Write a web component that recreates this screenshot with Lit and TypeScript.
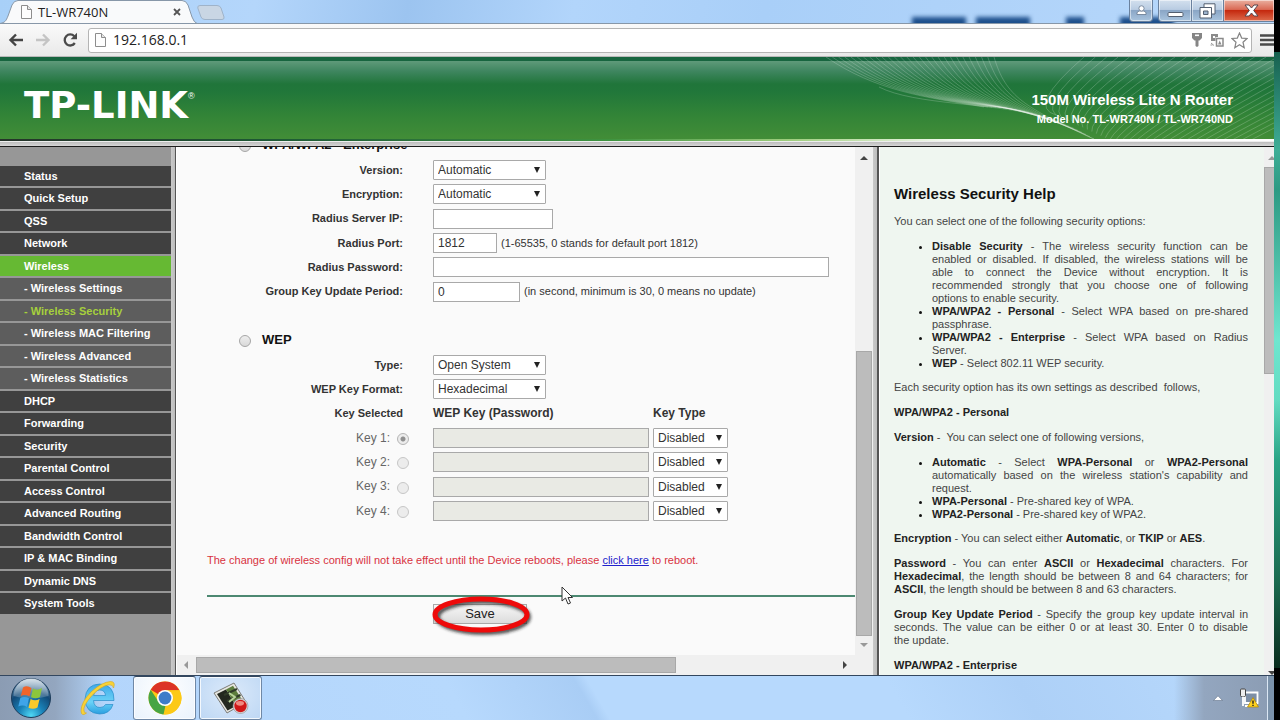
import { LitElement, html, svg, css } from "lit";
import { customElement, state } from "lit/decorators.js";
import { classMap } from "lit/directives/class-map.js";

interface NavItem {
  label: string;
  sub?: boolean;
}

const NAV: NavItem[] = [
  { label: "Status" },
  { label: "Quick Setup" },
  { label: "QSS" },
  { label: "Network" },
  { label: "Wireless" },
  { label: "Wireless Settings", sub: true },
  { label: "Wireless Security", sub: true },
  { label: "Wireless MAC Filtering", sub: true },
  { label: "Wireless Advanced", sub: true },
  { label: "Wireless Statistics", sub: true },
  { label: "DHCP" },
  { label: "Forwarding" },
  { label: "Security" },
  { label: "Parental Control" },
  { label: "Access Control" },
  { label: "Advanced Routing" },
  { label: "Bandwidth Control" },
  { label: "IP & MAC Binding" },
  { label: "Dynamic DNS" },
  { label: "System Tools" },
];

/* ---------- browser window chrome ---------- */
@customElement("browser-chrome")
export class BrowserChrome extends LitElement {
  static styles = css`
    :host {
      display: block;
      font-family: "Open Sans", "Noto Sans", sans-serif;
      color: #222;
    }
    button {
      border: 0;
      padding: 0;
      margin: 0;
      background: none;
      font: inherit;
      color: inherit;
      display: flex;
      align-items: center;
      justify-content: center;
    }
    svg {
      display: block;
    }
    .strip {
      position: relative;
      display: flex;
      align-items: flex-start;
      height: 23px;
      overflow: hidden;
      background: linear-gradient(100deg, #a8d0f8 0, #b4d6fb 20%, #9cc4f0 32%, #b2d5fb 45%, #a9cff8 60%, #b8d8fb 100%);
    }
    .blur {
      position: absolute;
      right: 100px;
      top: 17px;
      display: flex;
      gap: 10px;
      filter: blur(2px);
    }
    .blur i {
      width: 54px;
      height: 12px;
      background: #1d4f8c;
    }
    .blur i.short {
      width: 18px;
      margin: 0 26px;
    }
    .tab {
      position: relative;
      flex: none;
      width: 197px;
      height: 23px;
    }
    .shape {
      position: absolute;
      inset: 0;
    }
    .tabline {
      position: relative;
      display: flex;
      align-items: center;
      height: 23px;
      padding: 1px 16px 0 21px;
      box-sizing: border-box;
      font-size: 13px;
    }
    .tabline span {
      flex: 1;
      padding-left: 6px;
    }
    .newtab {
      margin-top: 5px;
    }
    .spacer {
      flex: 1;
    }
    .controls {
      position: relative;
      display: flex;
    }
    .wbtn {
      height: 22px;
      border: 1px solid #6a819e;
      border-top: 0;
      box-sizing: border-box;
      background: linear-gradient(#d3e0ee 0, #b9cce2 45%, #8aa6c6 50%, #a9c4de 100%);
      box-shadow: inset 0 0 0 1px rgba(255, 255, 255, 0.5);
    }
    .user {
      width: 24px;
      border-radius: 0 0 4px 4px;
      margin-right: 5px;
    }
    .min {
      width: 34px;
      border-radius: 0 0 0 4px;
    }
    .max {
      width: 32px;
      border-left: 0;
    }
    .close {
      width: 50px;
      border-left: 0;
      border-right: 0;
      padding-left: 5px;
      background: linear-gradient(#eab0a0 0, #da6a55 45%, #c5290f 50%, #dd6b4c 100%);
    }
    .bar {
      display: flex;
      align-items: center;
      height: 34px;
      box-sizing: border-box;
      border-top: 1px solid #8797a8;
      border-bottom: 1px solid #b9b9b9;
      background: linear-gradient(#fafafa, #e9e9e9);
      padding-left: 7px;
    }
    .nav {
      width: 18px;
      margin-right: 9px;
      height: 20px;
    }
    .omni {
      flex: 1;
      display: flex;
      align-items: center;
      height: 25px;
      box-sizing: border-box;
      border: 1px solid #b4b4b4;
      border-radius: 3px;
      background: #fff;
      padding: 0 3px 0 6px;
      gap: 7px;
    }
    .omni input {
      flex: 1;
      min-width: 0;
      border: 0;
      outline: 0;
      padding: 0;
      background: none;
      font: 14px/20px "Open Sans", "Noto Sans", sans-serif;
      color: #222;
    }
    .menu {
      width: 22px;
      padding-left: 5px;
      overflow: hidden;
    }
  `;

  private page() {
    return html`<svg width="11" height="14" viewBox="0 0 11 14" aria-hidden="true">
      <path d="M.5.5h6l4 4v9H.5z" fill="#fdfdfd" stroke="#8d8d8d" />
      <path d="M6.500 .5v4h4" fill="#e6e6e6" stroke="#8d8d8d" />
    </svg>`;
  }

  render() {
    return html`
      <div class="strip">
        <div class="blur"><i></i><i></i><i class="short"></i><i></i></div>
        <div class="tab">
          <svg class="shape" width="197" height="23" viewBox="0 0 197 23" aria-hidden="true">
            <path d="M0 23.500C5 22.500 6 21 8 16L12 5Q14 .5 18 .5H182Q186 .5 188 5L192 17Q194 22.500 197 23.500Z" fill="#f9fafb" stroke="#8797a8" />
          </svg>
          <div class="tabline">
            ${this.page()}<span>TL-WR740N</span>
            <button aria-label="Close tab">
              <svg width="8" height="8" viewBox="0 0 8 8"><path d="M1 1l6 6M7 1L1 7" stroke="#555" stroke-width="1.800" /></svg>
            </button>
          </div>
        </div>
        <button class="newtab" aria-label="New tab">
          <svg width="28" height="15" viewBox="0 0 28 15">
            <path d="M3 .5H20Q23 .5 24 3L27 12Q27.500 14.500 25 14.500H8Q5 14.500 4 12L.8 3Q.3 .5 3 .5Z" fill="#c9d6e4" stroke="#9fb3c9" />
          </svg>
        </button>
        <div class="spacer"></div>
        <div class="controls">
          <button class="wbtn user" aria-label="User">
            <svg width="11" height="11" viewBox="0 0 11 11"><path d="M1 9.500V8Q1 6.500 3.500 6H7.500Q10 6.500 10 8V9.500Z" fill="#fff" stroke="#65778e" stroke-width=".8" /><circle cx="5.500" cy="3.400" r="2.600" fill="#fff" stroke="#65778e" stroke-width=".8" /></svg>
          </button>
          <button class="wbtn min" aria-label="Minimize">
            <svg width="17" height="16" viewBox="0 0 17 16"><rect x="1" y="9.500" width="15" height="4" rx="1" fill="#fff" stroke="#535f70" /></svg>
          </button>
          <button class="wbtn max" aria-label="Restore">
            <svg width="17" height="16" viewBox="0 0 17 16">
              <path d="M5 .8H16V11H5Z" fill="#fff" stroke="#535f70" />
              <path d="M1 4.500H12.500V15H1Z" fill="#fff" stroke="#535f70" />
              <path d="M4.500 8H9V11.500H4.500Z" fill="#9db4ce" stroke="#535f70" />
            </svg>
          </button>
          <button class="wbtn close" aria-label="Close">
            <svg width="15" height="13" viewBox="0 0 15 13"><path d="M1 1H5L7.500 4L10 1H14L9.700 6.500L14 12H10L7.500 9L5 12H1L5.300 6.500Z" fill="#fff" stroke="#58464c" /></svg>
          </button>
        </div>
      </div>
      <div class="bar">
        <button class="nav" aria-label="Back">
          <svg width="16" height="14" viewBox="0 0 16 14"><path d="M15 7H3M8 1.500L2.500 7L8 12.500" fill="none" stroke="#444" stroke-width="2.400" /></svg>
        </button>
        <button class="nav" aria-label="Forward">
          <svg width="16" height="14" viewBox="0 0 16 14"><path d="M1 7H13M8 1.500L13.500 7L8 12.500" fill="none" stroke="#c4c4c4" stroke-width="2.400" /></svg>
        </button>
        <button class="nav" aria-label="Reload">
          <svg width="16" height="16" viewBox="0 0 16 16"><path d="M12.800 11A5.500 5.500 0 1 1 12.300 4.300" fill="none" stroke="#4a4a4a" stroke-width="2.300" /><path d="M15 .8V7.200H8.600Z" fill="#4a4a4a" /></svg>
        </button>
        <div class="omni">
          ${this.page()}
          <input aria-label="Address" value="192.168.0.1" />
          <svg width="12" height="16" viewBox="0 0 12 16" aria-hidden="true"><path d="M1 1H11V6L8.500 8.500H7.500V14L6 15L4.500 14V8.500H3.500L1 6Z" fill="#858585" /><rect x="4" y="2.500" width="4" height="1.600" fill="#fff" /></svg>
          <svg width="14" height="14" viewBox="0 0 14 14" aria-hidden="true">
            <path d="M1 1H8V4H5.500V8H1Z" fill="#8a8a8a" /><path d="M3 3h2v2H3z" fill="#fff" />
            <rect x="6.500" y="5.500" width="6.500" height="7.500" fill="#fff" stroke="#8a8a8a" stroke-width="1.500" />
            <path d="M8 11.500L9.700 7.500L11.500 11.500Z" fill="#8a8a8a" /><path d="M1 10L4 12.500M.5 12h2" stroke="#999" />
          </svg>
          <svg width="17" height="17" viewBox="0 0 17 17" aria-hidden="true"><path d="M8.500 1L10.700 6.100L16 6.500L12 10.200L13.200 15.700L8.500 12.800L3.800 15.700L5 10.200L1 6.500L6.300 6.100Z" fill="#fff" stroke="#858585" stroke-width="1.200" /></svg>
        </div>
        <button class="menu" aria-label="Menu">
          <svg width="16" height="14" viewBox="0 0 16 14"><path d="M2 2.500H16M2 7H16M2 11.500H16" stroke="#4a4a4a" stroke-width="2.400" /></svg>
        </button>
      </div>
    `;
  }
}

/* ---------- Windows taskbar ---------- */
@customElement("task-bar")
export class TaskBar extends LitElement {
  static styles = css`
    :host {
      display: flex;
      align-items: stretch;
      height: 45px;
      box-sizing: border-box;
      border-top: 1px solid #33475f;
      background:
        linear-gradient(90deg, #8b9cb3 0, #93a6bf 55px, rgba(181, 214, 252, 0) 105px),
        linear-gradient(270deg, #8b9cb3 0, #93a6bf 70px, rgba(181, 214, 252, 0) 100px),
        linear-gradient(60deg, #b2d4fb 0, #b7d9fd 36%, #a9cdf5 46%, #b7d9fd 47%, #b7d9fd 70%, #add0f7 80%, #b9dafd 100%);
    }
    button {
      border: 0;
      padding: 0;
      background: none;
      display: flex;
      align-items: center;
      justify-content: center;
    }
    svg {
      display: block;
    }
    .start {
      width: 62px;
    }
    .ie {
      width: 71px;
    }
    .task {
      width: 63px;
      box-sizing: border-box;
      border: 1px solid #6f88a6;
      border-top-color: #33475f;
      border-radius: 3px;
      box-shadow: inset 0 0 0 1px rgba(255, 255, 255, 0.8);
      margin-right: 3px;
      background: radial-gradient(ellipse at 50% 40%, #dceafa, #bdd7f4);
    }
    .task.on {
      background: radial-gradient(ellipse at 50% 30%, #ffffff, #e9f2fc);
    }
    .spacer {
      flex: 1;
    }
    .tray {
      display: flex;
      align-items: center;
      gap: 16px;
      padding-right: 8px;
    }
    .show {
      width: 6px;
      border-left: 1px solid #dbe7f4;
      background: #7c93ab;
    }
  `;

  render() {
    return html`
      <button class="start" aria-label="Start">
        <svg width="42" height="42" viewBox="0 0 42 42">
          <defs>
            <radialGradient id="orb" cx=".5" cy=".95" r=".9">
              <stop offset="0" stop-color="#4fd8f5" /><stop offset=".35" stop-color="#1a82b8" /><stop offset=".7" stop-color="#124a78" /><stop offset="1" stop-color="#5f88aa" />
            </radialGradient>
            <linearGradient id="gloss" x2="0" y2="1"><stop offset="0" stop-color="#fff" stop-opacity=".75" /><stop offset="1" stop-color="#fff" stop-opacity=".15" /></linearGradient>
          </defs>
          <circle cx="21" cy="21" r="19.500" fill="url(#orb)" stroke="#1d3c5a" />
          <path d="M3.500 19A17.500 17.500 0 0 1 38.500 19Q21 24 3.500 19Z" fill="url(#gloss)" />
          <path d="M13 10.500Q17 8 21.500 11L19.500 19.500Q15 17 10.800 19Z" fill="#f0642a" />
          <path d="M23 11.500Q27 14 32 11L30 20Q25.500 22.500 21 20Z" fill="#8cc63c" />
          <path d="M10.300 21Q14.500 18.800 19 21.300L17 30Q13 27.500 8.300 29.500Z" fill="#3fa4e8" />
          <path d="M20.600 22Q25 24.500 29.600 22L27.500 30.500Q23 33 18.500 30.700Z" fill="#fcc92c" />
        </svg>
      </button>
      <button class="ie" aria-label="Internet Explorer">
        <svg width="38" height="38" viewBox="0 0 38 38">
          <defs><linearGradient id="ieg" x2="0" y2="1"><stop offset="0" stop-color="#3fa9e8" /><stop offset=".6" stop-color="#6bd2f7" /><stop offset="1" stop-color="#2b9fe0" /></linearGradient></defs>
          <path d="M35 21.500H14.500Q15 28.500 21 28.500Q25 28.500 26.500 25.500H34Q31 35 20.500 35Q6.500 34 6 20Q7 5.500 20.500 5Q35.500 5.500 35 21.500ZM14.600 16.500H26.500Q26 11 20.700 11Q15.500 11.200 14.600 16.500Z" fill="url(#ieg)" stroke="#2a8cc9" stroke-width=".7" />
          <path d="M7.500 34Q2.500 38 2 32Q2 23 12.500 12.500Q23 3 31.500 2.500Q37 2.500 34.500 9Q34 5.500 30 5.800Q22 7 13 16.500Q3.500 27 5 32Q5.500 34.500 7.500 34Z" fill="#f8d238" stroke="#d9a818" stroke-width=".6" />
        </svg>
      </button>
      <button class="task on" aria-label="Google Chrome">
        <svg width="34" height="34" viewBox="0 0 34 34">
          <circle cx="17" cy="17" r="16.500" fill="#fcc916" />
          <path d="M17 17L2.700 8.700A16.500 16.500 0 0 1 31.400 9.200L17 9.500Z" fill="#dc3326" />
          <path d="M2.700 8.700L10.500 20.700L17.500 24.500L15.500 33.400A16.500 16.500 0 0 1 2.700 8.700Z" fill="#47a544" />
          <path d="M15.500 33.500L24 20L17 9.200H31.400A16.500 16.500 0 0 1 15.500 33.500Z" fill="#fcc916" />
          <circle cx="17" cy="17" r="8" fill="#fff" />
          <circle cx="17" cy="17" r="6.400" fill="#3d7cc9" />
        </svg>
      </button>
      <button class="task" aria-label="Screen recorder">
        <svg width="38" height="34" viewBox="0 0 38 34">
          <path d="M2 12L22 2L34 21L15 32Z" fill="#e6e6e0" stroke="#7c7c78" />
          <path d="M5 13L14 8.500L24 25L15.500 29.500Z" fill="#23281f" />
          <path d="M14 8.500L21 4.800L31.500 21L24 25Z" fill="#5d7d3d" />
          <path d="M12 14L25 8M15 20L28.500 14" stroke="#2f3a28" stroke-width="2" />
          <path d="M17 12L23 16L17 21" fill="none" stroke="#b8d49a" stroke-width="2" />
          <circle cx="28.500" cy="25" r="7.500" fill="#d8d8d8" stroke="#8f8f8f" stroke-width=".6" />
          <circle cx="28.500" cy="25" r="6.200" fill="#d01818" />
          <ellipse cx="28" cy="22.300" rx="4" ry="2.400" fill="#f08a80" />
        </svg>
      </button>
      <div class="spacer"></div>
      <div class="tray">
        <svg width="10" height="6" viewBox="0 0 10 6" aria-hidden="true"><path d="M.5 5.500L5 .8L9.500 5.500Z" fill="#fff" stroke="#607188" stroke-width=".6" /></svg>
        <svg width="20" height="20" viewBox="0 0 20 20" aria-hidden="true">
          <path d="M6 4.500H18.500V15H6Z" fill="#7d8fa6" stroke="#fff" stroke-width="1.800" />
          <rect x="1.500" y="1" width="5" height="7.500" rx="1" fill="#eee" stroke="#444" />
          <path d="M4 8.500V18M6 18H12" stroke="#fff" stroke-width="1.800" />
          <path d="M14 9.500L19.500 19H8.500Z" fill="#ffd21f" stroke="#b08400" stroke-width=".7" />
          <path d="M14 12.500V15.800M14 16.800V18" stroke="#222" stroke-width="1.400" />
        </svg>
      </div>
      <div class="show"></div>
    `;
  }
}

/* ---------- router page and desktop ---------- */
@customElement("app-root")
export class AppRoot extends LitElement {
  @state() private current = "Wireless Security";

  static styles = css`
    :host {
      display: grid;
      grid-template-columns: 1fr 6px;
      height: 100vh;
      overflow: hidden;
      position: relative;
      font: 12px/13px "Liberation Sans", Arial, sans-serif;
      color: #333;
    }
    .desktop {
      background: linear-gradient(#000 52px, #17604f 52px, #3fae97 150px, #2d9a83 190px, #6fe6cf 340px, #63dcc2 400px, #2aa486 460px, #1b6a50 580px, #0a2c1e 668px, #000 668px);
    }
    .screen {
      display: flex;
      flex-direction: column;
      min-width: 0;
      height: 100vh;
    }
    .banner {
      position: relative;
      display: flex;
      align-items: center;
      justify-content: space-between;
      height: 82px;
      flex: none;
      overflow: hidden;
      padding: 0 41px 0 24px;
      color: #fff;
      background: linear-gradient(#17653f 0, #17653f 4px, #5f9a7a 4px, #3f8660 14px, #20753a 27px, #21773a 35px, #328437 58px, #428d37 82px);
    }
    .mesh {
      position: absolute;
      right: 0;
      top: 0;
    }
    .logo {
      position: relative;
      display: flex;
      align-items: flex-start;
      padding-top: 16px;
      font: bold 37px/40px "DejaVu Sans", sans-serif;
    }
    .logo sup {
      font: 9px/9px "Liberation Sans", sans-serif;
      padding-top: 6px;
    }
    .model {
      position: relative;
      text-align: right;
      font-weight: bold;
      padding-top: 21px;
    }
    .model h1 {
      margin: 0;
      font-size: 15px;
      line-height: 20px;
    }
    .model p {
      margin: 0;
      font-size: 11px;
      line-height: 18px;
    }
    .rule {
      flex: none;
      height: 2px;
      background: linear-gradient(90deg, #26332a 0, #1d5a35 22%, #3f9440 48%, #9fcd7e 62%, #fff 76%);
    }
    .groove {
      flex: none;
      height: 6px;
      box-sizing: border-box;
      border-top: 1px solid #eee;
      border-bottom: 1px solid #1c1c1c;
      background: linear-gradient(#bdbdbd, #d6d6d6);
    }
    .frames {
      flex: 1;
      min-height: 0;
      display: grid;
      grid-template-columns: 171px 6px minmax(0, 1fr) 7px 394px;
    }
    .split {
      background: linear-gradient(90deg, #c9c9c9 0, #bdbdbd 60%, #555 61%, #555 80%, #fff 81%);
    }
    .side {
      background: #979797;
      padding-top: 19px;
      overflow: hidden;
    }
    .side ul {
      list-style: none;
      margin: 0;
      padding: 0;
      display: flex;
      flex-direction: column;
      gap: 2px;
    }
    .side li {
      height: 20px;
    }
    .side li:nth-child(even) {
      height: 21px;
    }
    .side a {
      display: block;
      height: 100%;
      padding-left: 24px;
      background: #404040;
      color: #fff;
      font-size: 11px;
      font-weight: bold;
      line-height: 20px;
      text-decoration: none;
      white-space: nowrap;
    }
    .side a.sub {
      background: #5d5d5d;
    }
    .side a.open {
      background: #66b933;
    }
    .side a.here {
      color: #a6d03c;
    }
    .center {
      display: grid;
      grid-template-columns: minmax(0, 1fr) 18px;
      grid-template-rows: minmax(0, 1fr) 20px;
      background: #f0f0f0;
    }
    .pane {
      background: #fafafa;
      overflow: hidden;
      padding-left: 30px;
    }
    .vbar {
      display: flex;
      flex-direction: column;
      align-items: center;
      gap: 6px;
      padding: 7px 0 5px;
      box-sizing: border-box;
    }
    .vthumb {
      width: 16px;
      flex: 0 0 285px;
      box-sizing: border-box;
      background: #bcbcbc;
      border: 1px solid #a8a8a8;
    }
    .vgap {
      flex: 1;
    }
    .hbar {
      display: flex;
      align-items: center;
      gap: 6px;
      padding: 0 6px 0 5px;
    }
    .hthumb {
      flex: 0 0 72%;
      height: 16px;
      box-sizing: border-box;
      background: #bcbcbc;
      border: 1px solid #a8a8a8;
    }
    .hgap {
      flex: 1;
    }
    .mode {
      display: flex;
      align-items: center;
      gap: 11px;
      padding-left: 32px;
      height: 20px;
      font-size: 13px;
      font-weight: bold;
      color: #111;
    }
    .mode.first {
      margin-top: -12px;
    }
    .mode.next {
      margin-top: 26px;
    }
    .mode label {
      line-height: 20px;
    }
    .rows {
      margin-top: 3px;
    }
    .row {
      display: grid;
      grid-template-columns: 196px 1fr;
      column-gap: 30px;
      align-items: center;
      height: 24px;
    }
    .row:nth-child(3n) {
      height: 25px;
    }
    .name {
      text-align: right;
      font-size: 11px;
      font-weight: bold;
      white-space: nowrap;
    }
    .name.key {
      display: flex;
      align-items: center;
      justify-content: flex-end;
      gap: 7px;
      margin-right: -6px;
      font-size: 12px;
      font-weight: normal;
      color: #666;
    }
    .field {
      display: flex;
      align-items: center;
      gap: 4px;
      white-space: nowrap;
    }
    .note {
      font-size: 11px;
    }
    .head {
      font-weight: bold;
    }
    .wide {
      width: 216px;
    }
    .text {
      height: 20px;
      box-sizing: border-box;
      border: 1px solid #a9a9a9;
      padding: 0 4px;
      margin: 0;
      background: #fff;
      font: 12px/18px "Liberation Sans", Arial, sans-serif;
      color: #333;
      border-radius: 0;
    }
    .text:disabled {
      background: #e9eae4;
    }
    .ip {
      width: 120px;
    }
    .port {
      width: 64px;
    }
    .pass {
      width: 396px;
    }
    .period {
      width: 87px;
    }
    .pick {
      position: relative;
      display: block;
    }
    .pick select {
      appearance: none;
      width: 100%;
      height: 20px;
      box-sizing: border-box;
      border: 1px solid #a9a9a9;
      border-radius: 1px;
      background: #fff;
      padding: 0 4px;
      margin: 0;
      font: 12px/18px "Liberation Sans", Arial, sans-serif;
      color: #333;
      display: block;
    }
    .pick svg {
      position: absolute;
      right: 6px;
      top: 7px;
      pointer-events: none;
    }
    .pick.big {
      width: 113px;
    }
    .pick.small {
      width: 75px;
    }
    input[type="radio"] {
      appearance: none;
      flex: none;
      width: 12px;
      height: 12px;
      margin: 2px 0 0;
      border: 1px solid #a6a6a6;
      border-radius: 50%;
      background: linear-gradient(#eee, #d9d9d9);
    }
    input[type="radio"]:disabled {
      border-color: #c6c6c6;
      background: #ececec;
    }
    input[type="radio"]:checked {
      background: radial-gradient(circle, #8f8f8f 0, #8f8f8f 2px, #ececec 3px);
      border-color: #b4b4b4;
    }
    .warn {
      margin: 28px 0 0;
      font-size: 11px;
      line-height: 18px;
      color: #d8323f;
      white-space: nowrap;
    }
    .warn a {
      color: #2222cc;
    }
    .line {
      height: 2px;
      margin-top: 26px;
      background: #4c8871;
    }
    .actions {
      display: flex;
      padding: 7px 0 0 226px;
    }
    .save {
      position: relative;
    }
    .save button {
      display: block;
      width: 94px;
      height: 20px;
      padding: 0;
      border: 1px solid #a9a9a9;
      background: linear-gradient(#f6f6f6, #dcdcdc);
      font: 13px/18px "Liberation Sans", Arial, sans-serif;
      color: #222;
    }
    .ring {
      position: absolute;
      left: -4px;
      top: -12px;
      pointer-events: none;
    }
    .help {
      display: grid;
      grid-template-columns: 1fr 10px;
      background: #eff6f0;
      overflow: hidden;
    }
    .text-col {
      padding: 37px 16px 0 14px;
      text-align: justify;
      color: #444;
      min-width: 0;
      font-size: 11px;
    }
    .text-col b,
    .text-col h3 {
      color: #222;
    }
    .text-col h2 {
      margin: 0 0 11px;
      font-size: 15px;
      line-height: 20px;
      color: #111;
    }
    .text-col p,
    .text-col h3 {
      margin: 0 0 12px;
      font-size: 11px;
      line-height: 13px;
    }
    .text-col ul {
      margin: 0 0 11px;
      padding-left: 38px;
    }
    .text-col li::marker {
      color: #111;
    }
    .full {
      display: block;
      text-align-last: justify;
    }
    .bar2 {
      background: #f0f0f0;
      overflow: hidden;
      display: flex;
      flex-direction: column;
      padding: 7px 0;
      box-sizing: border-box;
    }
    .bar2 svg {
      flex: none;
      margin-left: 4px;
    }
    .thumb2 {
      height: 207px;
      margin-top: 5px;
      width: 16px;
      background: #bcbcbc;
      border: 1px solid #a8a8a8;
      box-sizing: border-box;
    }
    .cursor {
      position: absolute;
      left: 561px;
      top: 586px;
      pointer-events: none;
    }
  `;

  private mesh() {
    const left = Array.from({ length: 28 }, (_, i) => {
      const t = i / 27;
      return svg`<path d=${`M${32 + 168 * t} 0C${82 + 130 * t} ${34 + 6 * t} ${130 + 100 * t} ${40 + 10 * t} ${190 + 110 * t} ${50 + 32 * t * t}`} />`;
    });
    const right = Array.from({ length: 30 }, (_, i) => {
      const t = i / 29;
      return svg`<path d=${`M${290 + 330 * t} 0Q${232 + 228 * t} ${50 + 30 * t} ${262 + 130 * t} ${58 + 60 * t}`} />`;
    });
    return html`<svg class="mesh" width="480" height="82" viewBox="0 0 480 82" aria-hidden="true">
      <g fill="none" stroke="#fff" stroke-opacity=".2">${left}${right}
        <path d="M85 30C120 48 200 46 240 58S285 76 300 82" /></g>
    </svg>`;
  }

  private select(id: string, size: string, value: string) {
    return html`<span class="pick ${size}">
      <select id=${id} aria-label=${value}><option>${value}</option></select>
      <svg width="6" height="6" viewBox="0 0 6 6" aria-hidden="true"><path d="M0 0H6L3 6Z" fill="#222" /></svg>
    </span>`;
  }

  private arrow(points: string, color: string) {
    return html`<svg width="8" height="8" viewBox="0 0 8 8" aria-hidden="true"><path d=${points} fill=${color} /></svg>`;
  }

  private go(e: Event, label: string) {
    e.preventDefault();
    this.current = label;
  }

  private nav() {
    return html`<nav class="side"><ul>
      ${NAV.map(
        (n) => html`<li><a href="#" @click=${(e: Event) => this.go(e, n.label)}
          class=${classMap({ sub: !!n.sub, open: n.label === "Wireless", here: n.label === this.current })}
        >${n.sub ? "- " : ""}${n.label}</a></li>`
      )}
    </ul></nav>`;
  }

  private settings() {
    return html`<form class="pane" @submit=${(e: Event) => e.preventDefault()}>
      <div class="mode first"><input type="radio" name="mode" id="ent" /><label for="ent">WPA/WPA2 - Enterprise</label></div>
      <div class="rows">
        <div class="row"><label class="name" for="ver">Version:</label>${this.select("ver", "big", "Automatic")}</div>
        <div class="row"><label class="name" for="enc">Encryption:</label>${this.select("enc", "big", "Automatic")}</div>
        <div class="row"><label class="name" for="ip">Radius Server IP:</label><div class="field"><input class="text ip" id="ip" /></div></div>
        <div class="row"><label class="name" for="port">Radius Port:</label><div class="field"><input class="text port" id="port" value="1812" /><span class="note">(1-65535, 0 stands for default port 1812)</span></div></div>
        <div class="row"><label class="name" for="pass">Radius Password:</label><div class="field"><input class="text pass" id="pass" /></div></div>
        <div class="row"><label class="name" for="per">Group Key Update Period:</label><div class="field"><input class="text period" id="per" value="0" /><span class="note">(in second, minimum is 30, 0 means no update)</span></div></div>
      </div>
      <div class="mode next"><input type="radio" name="mode" id="wep" /><label for="wep">WEP</label></div>
      <div class="rows">
        <div class="row"><label class="name" for="type">Type:</label>${this.select("type", "big", "Open System")}</div>
        <div class="row"><label class="name" for="fmt">WEP Key Format:</label>${this.select("fmt", "big", "Hexadecimal")}</div>
        <div class="row"><span class="name">Key Selected</span><div class="field head"><span class="wide">WEP Key (Password)</span><span>Key Type</span></div></div>
        ${[1, 2, 3, 4].map(
          (k) => html`<div class="row">
            <label class="name key">Key ${k}:<input type="radio" name="key" disabled ?checked=${k === 1} /></label>
            <div class="field"><input class="text wide" aria-label="WEP key ${k}" disabled />${this.select("kt" + k, "small", "Disabled")}</div>
          </div>`
        )}
      </div>
      <p class="warn">The change of wireless config will not take effect until the Device reboots, please <a href="#">click here</a> to reboot.</p>
      <div class="line"></div>
      <div class="actions"><div class="save">
        <button type="submit">Save</button>
        <svg class="ring" width="106" height="46" viewBox="0 0 106 46" aria-hidden="true">
          <defs><filter id="soft" x="-10%" y="-20%" width="120%" height="150%"><feGaussianBlur stdDeviation="1.500" /></filter></defs>
          <ellipse cx="54" cy="25" rx="45.500" ry="15.500" fill="none" stroke="#222" stroke-opacity=".75" stroke-width="5" filter="url(#soft)" />
          <ellipse cx="52" cy="22.500" rx="46" ry="15.500" fill="none" stroke="#ee0a0a" stroke-width="5" />
        </svg>
      </div></div>
    </form>`;
  }

  private help() {
    return html`<aside class="help">
      <div class="text-col">
        <h2>Wireless Security Help</h2>
        <p>You can select one of the following security options:</p>
        <ul>
          <li>
            <span class="full"><b>Disable Security</b> - The wireless security function can be</span>
            <span class="full">enabled or disabled. If disabled, the wireless stations will be</span>
            <span class="full">able to connect the Device without encryption. It is</span>
            <span class="full">recommended strongly that you choose one of following</span>
            options to enable security.
          </li>
          <li><b>WPA/WPA2 - Personal</b> - Select WPA based on pre-shared passphrase.</li>
          <li><span class="full"><b>WPA/WPA2 - Enterprise</b> - Select WPA based on Radius</span> Server.</li>
          <li><b>WEP</b> - Select 802.11 WEP security.</li>
        </ul>
        <p>Each security option has its own settings as described&nbsp; follows,</p>
        <h3>WPA/WPA2 - Personal</h3>
        <p><b>Version</b> -&nbsp; You can select one of following versions,</p>
        <ul>
          <li><b>Automatic</b> - Select <b>WPA-Personal</b> or <b>WPA2-Personal</b> automatically based on the wireless station's capability and request.</li>
          <li><b>WPA-Personal</b> - Pre-shared key of WPA.</li>
          <li><b>WPA2-Personal</b> - Pre-shared key of WPA2.</li>
        </ul>
        <p><b>Encryption</b> - You can select either <b>Automatic</b>, or <b>TKIP</b> or <b>AES</b>.</p>
        <p><b>Password</b> - You can enter <b>ASCII</b> or <b>Hexadecimal</b> characters. For <b>Hexadecimal</b>, the length should be between 8 and 64 characters; for <b>ASCII</b>, the length should be between 8 and 63 characters.</p>
        <p><b>Group Key Update Period</b> - Specify the group key update interval in seconds. The value can be either 0 or at least 30. Enter 0 to disable the&nbsp;update.</p>
        <h3>WPA/WPA2 - Enterprise</h3>
      </div>
      <div class="bar2">
        ${this.arrow("M0 6L4 2L8 6Z", "#999")}
        <div class="thumb2"></div>
        <div class="vgap"></div>
        ${this.arrow("M0 2L4 6L8 2Z", "#444")}
      </div>
    </aside>`;
  }

  render() {
    return html`
      <div class="screen">
        <browser-chrome></browser-chrome>
        <header class="banner">
          ${this.mesh()}
          <div class="logo">TP-LINK<sup>®</sup></div>
          <div class="model"><h1>150M Wireless Lite N Router</h1><p>Model No. TL-WR740N / TL-WR740ND</p></div>
        </header>
        <div class="rule"></div>
        <div class="groove"></div>
        <div class="frames">
          ${this.nav()}
          <div class="split"></div>
          <main class="center">
            ${this.settings()}
            <div class="vbar">
              ${this.arrow("M0 6L4 2L8 6Z", "#444")}
              <div class="vgap"></div>
              <div class="vthumb"></div>
              ${this.arrow("M0 1L4 5L8 1Z", "#999")}
            </div>
            <div class="hbar">
              ${this.arrow("M6 0L2 4L6 8Z", "#999")}
              <div class="hthumb"></div>
              <div class="hgap"></div>
              ${this.arrow("M2 0L6 4L2 8Z", "#444")}
            </div>
          </main>
          <div class="split"></div>
          ${this.help()}
        </div>
        <task-bar></task-bar>
      </div>
      <div class="desktop"></div>
      <svg class="cursor" width="14" height="20" viewBox="0 0 14 20" aria-hidden="true">
        <path d="M1 1V15L4.500 12L7 18L9.500 17L7 11.500H11.500Z" fill="#fff" stroke="#333" />
      </svg>
    `;
  }
}
